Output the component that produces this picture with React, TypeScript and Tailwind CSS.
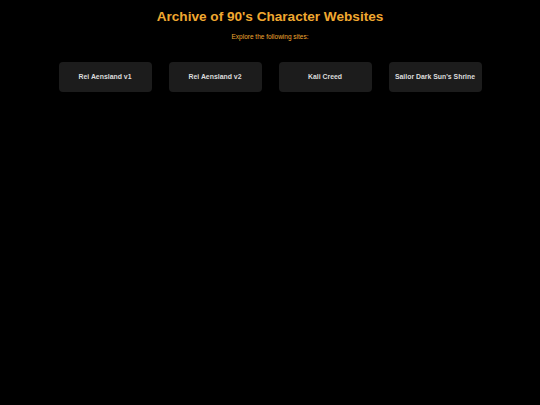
const sites = ['Rei Aensland v1', 'Rei Aensland v2', 'Kali Creed', "Sailor Dark Sun's Shrine"]

export default function App() {
  return (
    <div className="min-h-screen w-full bg-black text-center font-['Liberation_Sans',Arial,sans-serif]">
      <h1 className="pt-[8px] text-[13.6px] leading-[17px] font-bold text-[#f0a830]">
        Archive of 90's Character Websites
      </h1>
      <p className="mt-[8px] text-[6.5px] leading-[8px] text-[#f0a830]">Explore the following sites:</p>
      <div className="mt-[21px] flex justify-center gap-[17px]">
        {sites.map((s) => (
          <a
            key={s}
            href="#"
            className="flex h-[30px] w-[93px] items-center justify-center rounded-[4px] bg-[#1c1c1c] text-[6.9px] font-bold text-[#dddddd]"
          >
            {s}
          </a>
        ))}
      </div>
    </div>
  )
}
